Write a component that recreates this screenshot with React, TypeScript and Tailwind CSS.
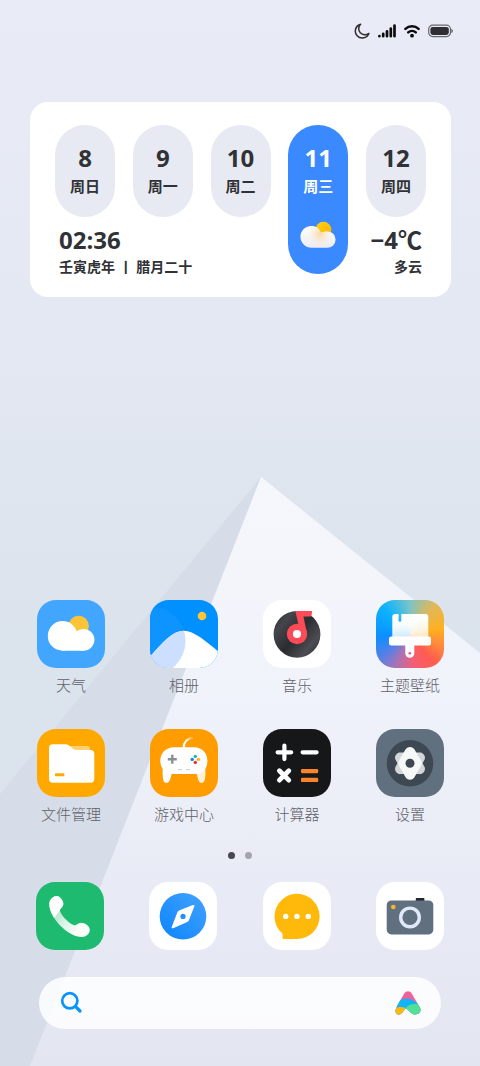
import type { ReactNode } from "react";

interface Day {
  date: number;
  name: string;
  today?: boolean;
}

interface AppItem {
  name: string;
  tile: string;
  icon: ReactNode;
}

const days: Day[] = [
  { date: 8, name: "周日" },
  { date: 9, name: "周一" },
  { date: 10, name: "周二" },
  { date: 11, name: "周三", today: true },
  { date: 12, name: "周四" },
];

const WeatherIcon = () => (
  <>
    <circle cx="41.7" cy="26" r="10.2" fill="#fcc436" />
    <circle cx="25.6" cy="35.9" r="14.8" fill="#fff" />
    <circle cx="46.5" cy="39.8" r="10.9" fill="#fff" />
    <path d="M25.6 34H46.5V50.7H25.6Z" fill="#fff" />
  </>
);

const AlbumIcon = () => (
  <>
    <defs>
      <clipPath id="album-hill">
        <path d="M-1 58C12 43 22 30.7 34 30.7C44 30.7 57 42 69 52V69H-1Z" />
      </clipPath>
    </defs>
    <circle cx="1" cy="41" r="34.5" fill="#0d94ff" />
    <circle cx="52" cy="16" r="4.3" fill="#fcc436" />
    <g clipPath="url(#album-hill)">
      <path d="M-1 0H69V69H-1Z" fill="#fff" />
      <circle cx="1" cy="41" r="34.5" fill="#cddfff" />
    </g>
  </>
);

const MusicIcon = () => (
  <>
    <defs>
      <linearGradient id="disc" x1="0" y1="0.1" x2="1" y2="0.9">
        <stop offset="0" stopColor="#2c2d31" />
        <stop offset="0.2" stopColor="#45464b" />
        <stop offset="0.5" stopColor="#2b2c30" />
        <stop offset="0.8" stopColor="#4c4d52" />
        <stop offset="1" stopColor="#2c2d31" />
      </linearGradient>
    </defs>
    <circle cx="34" cy="34.3" r="23.4" fill="url(#disc)" />
    <path
      d="M33.4 11H48.2C49 11 49.3 11.5 49.1 12.3L48.6 15.3C48.4 16.2 48 16.5 47.2 16.5H40.4L44 33.5H37.5L32.6 12.3C32.4 11.5 32.6 11 33.4 11Z"
      fill="#fb4b56"
    />
    <circle cx="34" cy="34" r="10.2" fill="#fb4b56" />
    <circle cx="34" cy="34" r="4.1" fill="#fff" />
  </>
);

const ThemeIcon = () => (
  <>
    <defs>
      <linearGradient id="brush" x1="0.3" y1="0" x2="0.6" y2="1">
        <stop offset="0" stopColor="#fff" />
        <stop offset="0.4" stopColor="#fff" stopOpacity="0.97" />
        <stop offset="1" stopColor="#fff" stopOpacity="0.78" />
      </linearGradient>
    </defs>
    <path
      d="M19 14H22.6V20.4C22.6 22.2 25.3 22.2 25.3 20.4V14H49.6C51.2 14 52.3 15 52.3 16.7V37H16.3V16.7C16.3 15 17.4 14 19 14Z"
      fill="url(#brush)"
    />
    <rect x="13" y="36.6" width="42" height="8.8" rx="2.2" fill="#fff" />
    <path d="M29.3 45H38.3V53.3A4.5 4.5 0 0 1 29.3 53.3Z" fill="#fff" />
    <circle cx="33.8" cy="53.2" r="1.3" fill="#f0506e" />
  </>
);

const FilesIcon = () => (
  <>
    <path d="M31 17H50.5Q53 17 53 19.5V24H31Z" fill="#ffd070" />
    <path
      d="M16 15.3H28C31.5 15.3 32.6 17 34.6 18.7C36.8 20.6 38 21 41 21H53.3Q57.3 21 57.3 25V49.7Q57.3 53.7 53.3 53.7H16Q12 53.7 12 49.7V19.3Q12 15.3 16 15.3Z"
      fill="#fff"
    />
    <rect x="18" y="44.3" width="9.4" height="3" rx="0.8" fill="#ffa900" />
  </>
);

const GamesIcon = () => (
  <>
    <defs>
      <linearGradient id="cable" x1="33" y1="18" x2="43" y2="9" gradientUnits="userSpaceOnUse">
        <stop offset="0" stopColor="#fff" />
        <stop offset="0.5" stopColor="#fff" />
        <stop offset="1" stopColor="#fff" stopOpacity="0.2" />
      </linearGradient>
    </defs>
    <path d="M33.6 19C33.6 13 36.5 9.8 43 8.6" fill="none" stroke="url(#cable)" strokeWidth="2" />
    <path d="M46.5 43C47.6 49 48.4 54 51.6 54C54.8 54 56 49 55.2 38Z" fill="#fff0d6" />
    <path
      d="M24 18.3H44C53 18.3 57.5 25 57.4 32C57.3 36 56 39 54.6 41L50.5 45H21.5C20.6 49.6 19.6 54 16.4 54C13 54 12.4 48.6 12.7 40C11.3 38 10.4 35.4 10.3 32C10.2 25 15 18.3 24 18.3Z"
      fill="#fff"
    />
    <path d="M17.8 30.3H26.8M22.3 25.8V34.8" stroke="#8a8e96" strokeWidth="2.4" />
    <circle cx="45.3" cy="27.4" r="1.7" fill="#1fb5a8" />
    <circle cx="42.2" cy="30.4" r="1.7" fill="#1280f0" />
    <circle cx="48.4" cy="30.4" r="1.7" fill="#fcb322" />
    <circle cx="45.3" cy="33.4" r="1.7" fill="#ee2b35" />
    <path d="M28 40.6H32M36 40.6H40" stroke="#d3d5d9" strokeWidth="1.1" />
  </>
);

const CalculatorIcon = () => (
  <>
    <path
      d="M14.6 23.3H28.2M21.4 16.5V30.1M39.6 23.3H53.6"
      stroke="#fff"
      strokeWidth="4.2"
      strokeLinecap="round"
    />
    <path
      d="M16.4 41.7L25.8 51.1M25.8 41.7L16.4 51.1"
      stroke="#fff"
      strokeWidth="4.8"
      strokeLinecap="round"
    />
    <rect x="38" y="40" width="17.2" height="4.3" rx="1.2" fill="#fb8428" />
    <rect x="38" y="48.8" width="17.2" height="4.3" rx="1.2" fill="#fb8428" />
  </>
);

const SettingsIcon = () => (
  <>
    <defs>
      <path
        id="petal"
        d="M29.3 20.8C31 16.9 37 16.9 38.7 20.8L45.2 32.1C46 33.5 46 35.1 45.2 36.5L38.7 47.8C37 51.7 31 51.7 29.3 47.8L22.8 36.5C22 35.1 22 33.5 22.8 32.1Z"
      />
    </defs>
    <circle cx="34" cy="34.3" r="23.3" fill="#3e4852" />
    <g fill="#d3d6d8">
      <use href="#petal" transform="rotate(60 34 34.3)" />
      <use href="#petal" transform="rotate(-60 34 34.3)" />
    </g>
    <use href="#petal" fill="#f6f7f7" />
    <circle cx="34" cy="34.3" r="4.5" fill="#3e4852" />
  </>
);

const PhoneIcon = () => (
  <>
    <defs>
      <linearGradient id="handset" x1="20" y1="30" x2="42" y2="48" gradientUnits="userSpaceOnUse">
        <stop offset="0" stopColor="#b4e6cd" />
        <stop offset="0.5" stopColor="#dcf4e8" />
        <stop offset="1" stopColor="#f8fdfa" />
      </linearGradient>
      <clipPath id="earpiece">
        <path d="M10 10H32V24L24.5 28L18.5 35.5L10 38Z" />
      </clipPath>
      <path
        id="receiver"
        d="M13.3 22C13.3 17 18 13.8 21 14C24 14.3 27.8 19 27.3 22.5C27 25 24 26.5 23.8 28.5C25.5 34 33 41.5 38 43.3C40.5 43.6 42 40.7 45 40.7C49 40.7 54 44 53.8 48C53.6 52 50 55 46 55C32 55 13.3 36 13.3 22Z"
      />
    </defs>
    <use href="#receiver" fill="url(#handset)" />
    <use href="#receiver" fill="#fff" clipPath="url(#earpiece)" />
  </>
);

const BrowserIcon = () => (
  <>
    <defs>
      <linearGradient id="compass" x1="1" y1="0" x2="0" y2="1">
        <stop offset="0" stopColor="#44a3ff" />
        <stop offset="1" stopColor="#0b84fd" />
      </linearGradient>
    </defs>
    <circle cx="34" cy="34.3" r="23.3" fill="url(#compass)" />
    <path
      d="M43.8 23.1C45 22.5 45.8 23.2 45.3 24.4L40 38C39.6 39 39.2 39.4 38.2 39.9L24.2 46.2C23 46.7 22.2 45.9 22.8 44.8L28.4 30.3C28.8 29.4 29.2 28.9 30 28.6Z"
      fill="#fff"
    />
    <circle cx="34" cy="34.4" r="2.6" fill="#2390ff" />
  </>
);

const MessagesIcon = () => (
  <>
    <path
      d="M34 11.8A22.6 22.6 0 1 1 34 57H21C20 57 19.5 56.5 19.5 55.5V51.6A22.6 22.6 0 0 1 34 11.8Z"
      fill="#ffb90a"
    />
    <circle cx="22.7" cy="34.4" r="2.7" fill="#fff" />
    <circle cx="34" cy="34.4" r="2.7" fill="#fff" />
    <circle cx="45.3" cy="34.4" r="2.7" fill="#fff" />
  </>
);

const CameraIcon = () => (
  <>
    <rect x="39.8" y="16" width="8.6" height="4" rx="0.8" fill="#22252b" />
    <rect x="10.7" y="18.4" width="46.6" height="34" rx="4.6" fill="#60707e" />
    <circle cx="17.3" cy="25" r="2.3" fill="#fbb42e" />
    <circle cx="34" cy="35.4" r="9.3" fill="none" stroke="#e0e9fa" strokeWidth="3.4" />
  </>
);

const apps: AppItem[] = [
  { name: "天气", tile: "bg-[#42a6ff]", icon: <WeatherIcon /> },
  { name: "相册", tile: "bg-[#0090ff]", icon: <AlbumIcon /> },
  { name: "音乐", tile: "bg-white", icon: <MusicIcon /> },
  {
    name: "主题壁纸",
    tile: "bg-[conic-gradient(#7cc4c6_0deg,#e0b85a_40deg,#ffb01e_80deg,#ff8a3c_110deg,#ff5c50_140deg,#f25f78_175deg,#a673b8_205deg,#5380e8_232deg,#0a8fff_265deg,#0db2ff_315deg,#7cc4c6_360deg)]",
    icon: <ThemeIcon />,
  },
  { name: "文件管理", tile: "bg-[#ffa900]", icon: <FilesIcon /> },
  { name: "游戏中心", tile: "bg-[#ff9c00]", icon: <GamesIcon /> },
  { name: "计算器", tile: "bg-[#161719]", icon: <CalculatorIcon /> },
  { name: "设置", tile: "bg-[#60707e]", icon: <SettingsIcon /> },
];

const dock: AppItem[] = [
  { name: "电话", tile: "bg-[#1dba70]", icon: <PhoneIcon /> },
  { name: "浏览器", tile: "bg-white", icon: <BrowserIcon /> },
  { name: "短信", tile: "bg-white", icon: <MessagesIcon /> },
  { name: "相机", tile: "bg-white", icon: <CameraIcon /> },
];

function Wallpaper() {
  return (
    <svg
      className="absolute inset-0 -z-10 h-full w-full"
      viewBox="0 0 480 1066"
      preserveAspectRatio="none"
      aria-hidden="true"
    >
      <defs>
        <linearGradient id="sky" x1="0" y1="0" x2="0" y2="1">
          <stop offset="0" stopColor="#e9ecf6" />
          <stop offset="0.3" stopColor="#e4e8f2" />
          <stop offset="0.6" stopColor="#dbe3ed" />
          <stop offset="1" stopColor="#dbe3ed" />
        </linearGradient>
        <linearGradient id="facet" x1="0" y1="0" x2="0" y2="1">
          <stop offset="0" stopColor="#f6f7fc" />
          <stop offset="0.35" stopColor="#f0f3fa" />
          <stop offset="0.7" stopColor="#e8ebf5" />
          <stop offset="1" stopColor="#e3e6f0" />
        </linearGradient>
      </defs>
      <path d="M0 0H480V1066H0Z" fill="url(#sky)" />
      <path d="M261 477L0 794V1066H60Z" fill="#d6dde9" />
      <path d="M261 477L480 653V1066H30Z" fill="url(#facet)" />
    </svg>
  );
}

function StatusBar() {
  return (
    <div className="flex h-4 items-center justify-end gap-2 pr-[27px]">
      <svg width="16" height="16" viewBox="0 0 16 16" aria-label="勿扰模式">
        <path
          d="M6.6 1.2A7 7 0 1 0 14.9 10.4A6.2 6.2 0 0 1 6.6 1.2Z"
          fill="none"
          stroke="#2e2f33"
          strokeWidth="1.5"
          strokeLinejoin="round"
        />
      </svg>
      <svg width="18" height="14" viewBox="0 0 18 14" aria-label="信号">
        <path
          d="M1.4 12V12.2M5.2 9.8V12.2M9 7.3V12.2M12.8 4.6V12.2M16.5 1.6V12.2"
          stroke="#0c0c0e"
          strokeWidth="2.7"
          strokeLinecap="round"
        />
      </svg>
      <svg width="16" height="14" viewBox="0 0 16 14" aria-label="无线网络">
        <g fill="none" stroke="#0c0c0e" strokeWidth="2.5" strokeLinecap="round">
          <path d="M1.4 4.8A9.6 9.6 0 0 1 14.6 4.8" />
          <path d="M4.2 8.4A5.6 5.6 0 0 1 11.8 8.4" />
        </g>
        <circle cx="8" cy="11.7" r="1.9" fill="#0c0c0e" />
      </svg>
      <svg width="25" height="14" viewBox="0 0 25 14" aria-label="电量">
        <rect x="0.7" y="1.2" width="21.8" height="11.4" rx="4" fill="none" stroke="#66676c" strokeWidth="1.2" />
        <rect x="2.4" y="2.9" width="18.4" height="8" rx="2.4" fill="#2e2f33" />
        <path d="M23.4 4.8C25.2 5.8 25.2 8 23.4 9Z" fill="#55565b" />
      </svg>
    </div>
  );
}

function CloudySun() {
  return (
    <svg width="36" height="28" viewBox="0 0 36 28" className="mt-[25px]" aria-hidden="true">
      <defs>
        <linearGradient id="sun" x1="0" y1="0" x2="1" y2="1">
          <stop offset="0" stopColor="#ffd21a" />
          <stop offset="1" stopColor="#ffb000" />
        </linearGradient>
        <linearGradient id="cloud" x1="0" y1="0" x2="0" y2="1">
          <stop offset="0" stopColor="#fff" />
          <stop offset="1" stopColor="#ececef" />
        </linearGradient>
        <radialGradient id="glow" cx="20" cy="13" r="12" gradientUnits="userSpaceOnUse">
          <stop offset="0" stopColor="#fbd9a8" />
          <stop offset="1" stopColor="#fbe6cc" stopOpacity="0" />
        </radialGradient>
        <path
          id="puff"
          d="M11.4 4.9C15.8 4.9 19.4 7.4 21 11.9C23 10.8 25.2 10.4 27.4 10.4A8.2 8.2 0 0 1 27.4 26.8H11.4A10.9 10.9 0 0 1 11.4 4.9Z"
        />
      </defs>
      <circle cx="23.4" cy="8.8" r="8" fill="url(#sun)" />
      <use href="#puff" fill="url(#cloud)" />
      <use href="#puff" fill="url(#glow)" />
    </svg>
  );
}

function DayPill({ day }: { day: Day }) {
  return (
    <div
      className={
        day.today
          ? "row-span-2 flex flex-col items-center rounded-full bg-[#3a89ff] pt-[21px] text-white"
          : "flex flex-col items-center rounded-full bg-[#e7eaf2] pt-[21px]"
      }
    >
      <span className="text-2xl leading-6 font-bold">{day.date}</span>
      <span className="mt-1.5 text-[15px] leading-5 font-bold">{day.name}</span>
      {day.today && <CloudySun />}
    </div>
  );
}

function CalendarCard() {
  return (
    <section className="mr-[29px] ml-[30px] mt-[63px] grid grid-cols-[repeat(5,60px)] grid-rows-[92px_57px] justify-between rounded-[18px] bg-white px-[25px] py-[23px] text-[#303236]">
      {days.map((day) => (
        <DayPill key={day.date} day={day} />
      ))}
      <div className="col-span-3 pt-2.5 pl-1">
        <p className="text-2xl leading-[26px] font-bold">02:36</p>
        <p className="mt-1.5 text-sm leading-4 font-bold whitespace-nowrap">壬寅虎年 丨 腊月二十</p>
      </div>
      <div className="flex flex-col items-end pt-2.5 pr-1">
        <p className="text-2xl leading-[26px] font-bold whitespace-nowrap">−4℃</p>
        <p className="mt-1.5 text-sm leading-4 font-bold">多云</p>
      </div>
    </section>
  );
}

function Tile({ app }: { app: AppItem }) {
  return (
    <span className={`block size-[68px] overflow-hidden rounded-[19px] ${app.tile}`}>
      <svg width="68" height="68" viewBox="0 0 68 68" aria-hidden="true">
        {app.icon}
      </svg>
    </span>
  );
}

function SearchBar() {
  return (
    <form
      role="search"
      className="mx-[39px] mt-[27px] flex h-[52px] items-center rounded-full bg-white/85 px-5"
      onSubmit={(e) => e.preventDefault()}
    >
      <button type="submit" aria-label="搜索">
        <svg width="24" height="24" viewBox="0 0 24 24" fill="none" stroke="#0a94fb" strokeLinecap="round">
          <circle cx="10.8" cy="9.8" r="7.6" strokeWidth="2.7" />
          <path d="M16.6 15.6L21 20" strokeWidth="3.2" />
        </svg>
      </button>
      <input
        type="search"
        aria-label="搜索内容"
        className="h-full min-w-0 flex-1 bg-transparent px-3 text-[15px] outline-none"
      />
      <button type="button" aria-label="小爱同学">
        <svg width="26" height="24" viewBox="0 0 26 24">
          <defs>
            <clipPath id="assistant">
              <path d="M9.3 2.6C11 -0.4 15 -0.4 16.7 2.6L24.8 16.4C27 20.6 23.6 23.6 20 23.4C15.4 23.2 14 18.6 10.8 17.2C8.6 19.2 7.4 23.4 3.6 23.4C1 23.4 0 21 0.8 18.2C2.6 13 6.6 7.4 9.3 2.6Z" />
            </clipPath>
          </defs>
          <g clipPath="url(#assistant)">
            <path d="M0 0H26V24H0Z" fill="#f2609a" />
            <path d="M0 14C5 6.8 13 6 18 9.4L26 14V24H0Z" fill="#12b4f8" />
            <path d="M10.4 17.4C14 12.6 20 12 26 14V24H12Z" fill="#52e094" />
            <path d="M0 18C3 15.6 6.5 15.4 10.6 17L7 24H0Z" fill="#fdb90c" />
          </g>
        </svg>
      </button>
    </form>
  );
}

export default function App() {
  return (
    <main className="relative isolate flex min-h-screen flex-col pt-[23px] pb-[37px] font-['Open_Sans','Noto_Sans_CJK_SC',sans-serif]">
      <Wallpaper />
      <StatusBar />
      <CalendarCard />

      <div className="min-h-8 flex-1" />

      <div className="grid grid-cols-[repeat(4,68px)] justify-between gap-y-[34px] pr-9 pl-[37px]">
        {apps.map((app) => (
          <button key={app.name} type="button" className="flex flex-col items-center">
            <Tile app={app} />
            <span className="mt-[7px] text-[15px] leading-5 font-light whitespace-nowrap text-[#5f6167]">
              {app.name}
            </span>
          </button>
        ))}
      </div>

      <div className="mt-7 flex justify-center gap-[10px]">
        <span className="size-[7px] rounded-full bg-[#47484d]" />
        <span className="size-[7px] rounded-full bg-[#a2a3ad]" />
      </div>

      <nav className="mt-[23px] flex justify-between px-9">
        {dock.map((app) => (
          <button key={app.name} type="button" aria-label={app.name}>
            <Tile app={app} />
          </button>
        ))}
      </nav>

      <SearchBar />
    </main>
  );
}
